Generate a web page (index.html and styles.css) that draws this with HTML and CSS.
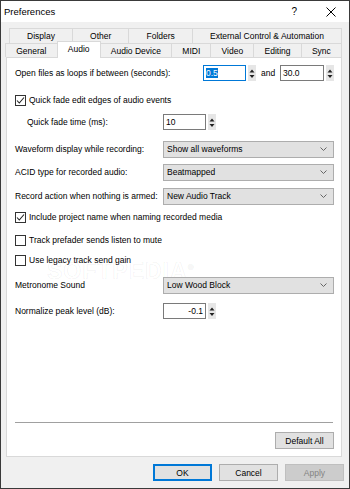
FILE: index.html
```html
<!DOCTYPE html>
<html>
<head>
<meta charset="utf-8">
<link rel="stylesheet" href="styles.css">
</head>
<body>
<div class="window">
  <div class="titlebar">
    <span class="title">Preferences</span>
    <span class="help">?</span>
    <svg class="close" width="10" height="10" viewBox="0 0 10 10"><path d="M0.5 0.5 L9.5 9.5 M9.5 0.5 L0.5 9.5" stroke="#000" stroke-width="1" fill="none"/></svg>
  </div>
  <div class="body">
    <div class="tabrow back">
      <div class="tab">Display</div>
      <div class="tab">Other</div>
      <div class="tab">Folders</div>
      <div class="tab">External Control &amp; Automation</div>
    </div>
    <div class="tabrow front">
      <div class="tab">General</div>
      <div class="tab active">Audio</div>
      <div class="tab">Audio Device</div>
      <div class="tab">MIDI</div>
      <div class="tab">Video</div>
      <div class="tab">Editing</div>
      <div class="tab">Sync</div>
    </div>
    <div class="panel">
      <div class="row r-a">
        <span class="label">Open files as loops if between (seconds):</span>
        <div class="num focus w43"><span class="sel">0.5</span></div>
        <svg class="spin" width="8" height="16" viewBox="0 0 8 16"><path d="M4 4.5 L6.5 7.5 L1.5 7.5 Z M1.5 10 L6.5 10 L4 13 Z" fill="#222"/></svg>
        <span class="and">and</span>
        <div class="num w44">30.0</div>
        <svg class="spin" width="8" height="16" viewBox="0 0 8 16"><path d="M4 4.5 L6.5 7.5 L1.5 7.5 Z M1.5 10 L6.5 10 L4 13 Z" fill="#222"/></svg>
      </div>
      <div class="row r-b">
        <span class="check"><svg width="11" height="11" viewBox="0 0 11 11"><path d="M2 5.5 L4.3 8 L9 2.5" stroke="#222" stroke-width="1.1" fill="none"/></svg></span>
        <span>Quick fade edit edges of audio events</span>
      </div>
      <div class="row r-c">
        <span class="label col indent">Quick fade time (ms):</span>
        <div class="num w43">10</div>
        <svg class="spin" width="8" height="16" viewBox="0 0 8 16"><path d="M4 4.5 L6.5 7.5 L1.5 7.5 Z M1.5 10 L6.5 10 L4 13 Z" fill="#222"/></svg>
      </div>
      <div class="row r-d">
        <span class="label col">Waveform display while recording:</span>
        <div class="select"><span>Show all waveforms</span><svg width="7" height="4" viewBox="0 0 7 4"><path d="M0.5 0.5 L3.5 3.5 L6.5 0.5" stroke="#666" fill="none"/></svg></div>
      </div>
      <div class="row r-e">
        <span class="label col">ACID type for recorded audio:</span>
        <div class="select"><span>Beatmapped</span><svg width="7" height="4" viewBox="0 0 7 4"><path d="M0.5 0.5 L3.5 3.5 L6.5 0.5" stroke="#666" fill="none"/></svg></div>
      </div>
      <div class="row r-f">
        <span class="label col">Record action when nothing is armed:</span>
        <div class="select"><span>New Audio Track</span><svg width="7" height="4" viewBox="0 0 7 4"><path d="M0.5 0.5 L3.5 3.5 L6.5 0.5" stroke="#666" fill="none"/></svg></div>
      </div>
      <div class="row r-g">
        <span class="check"><svg width="11" height="11" viewBox="0 0 11 11"><path d="M2 5.5 L4.3 8 L9 2.5" stroke="#222" stroke-width="1.1" fill="none"/></svg></span>
        <span>Include project name when naming recorded media</span>
      </div>
      <div class="row r-h">
        <span class="check"></span>
        <span>Track prefader sends listen to mute</span>
      </div>
      <div class="row r-i">
        <span class="check"></span>
        <span>Use legacy track send gain</span>
      </div>
      <div class="row r-j">
        <span class="label col">Metronome Sound</span>
        <div class="select"><span>Low Wood Block</span><svg width="7" height="4" viewBox="0 0 7 4"><path d="M0.5 0.5 L3.5 3.5 L6.5 0.5" stroke="#666" fill="none"/></svg></div>
      </div>
      <div class="row r-k">
        <span class="label col">Normalize peak level (dB):</span>
        <div class="num w43 right">-0.1</div>
        <svg class="spin" width="8" height="16" viewBox="0 0 8 16"><path d="M4 4.5 L6.5 7.5 L1.5 7.5 Z M1.5 10 L6.5 10 L4 13 Z" fill="#222"/></svg>
      </div>
      <div class="spacer"></div>
      <div class="separator"></div>
      <div class="panel-foot">
        <button class="btn">Default All</button>
      </div>
      <div class="watermark">SOFTPEDIA<sup>®</sup></div>
    </div>
    <div class="buttons">
      <button class="btn default">OK</button>
      <button class="btn">Cancel</button>
      <button class="btn disabled">Apply</button>
    </div>
  </div>
</div>
</body>
</html>
```

FILE: styles.css
```css
* { box-sizing: border-box; }
html, body { margin: 0; padding: 0; background: #fff; }
body {
  font-family: "Liberation Sans", Arial, sans-serif;
  font-size: 8.5px;
  color: #000;
}
.window {
  width: 350px;
  height: 489px;
  border: 1px solid #3a3a3a;
  display: flex;
  flex-direction: column;
  background: #f0f0f0;
}
.titlebar {
  height: 21px;
  background: #fff;
  display: flex;
  align-items: center;
  padding-left: 3px;
}
.title { font-size: 9.5px; flex: 1; }
.help { font-size: 10px; margin-right: 29px; }
.close { margin-right: 13px; }
.body {
  flex: 1;
  display: flex;
  flex-direction: column;
  padding: 6px 5px 0 4px;
}
.tabrow { display: flex; }
.tabrow.back { height: 15px; margin: 0 3px 0 4px; }
.tabrow.front { height: 14px; margin: 0 3px 0 0; position: relative; z-index: 2; }
.tab {
  flex: 1 1 auto;
  text-align: center;
  border: 1px solid #d9d9d9;
  border-bottom: none;
  margin-right: -1px;
  background: #f0f0f0;
  display: flex;
  align-items: center;
  justify-content: center;
  white-space: nowrap;
}
.tab.active {
  background: #fff;
  margin-top: -2px;
  height: 17px;
  padding-bottom: 3px;
  position: relative;
  z-index: 3;
}
.panel {
  height: 400px;
  margin: 0 2px 0 1px;
  background: #fff;
  border: 1px solid #d9d9d9;
  display: flex;
  flex-direction: column;
  padding: 6px 7px 7px 8px;
  position: relative;
}
.row { height: 18px; display: flex; align-items: center; white-space: nowrap; position: relative; z-index: 1; }
.r-b { margin-top: 9px; }
.r-c { margin-top: 4px; }
.r-d { margin-top: 9px; }
.r-e { margin-top: 5px; }
.r-f { margin-top: 6px; }
.r-g { margin-top: 3px; }
.r-h { margin-top: 5px; }
.r-i { margin-top: 2px; }
.r-j { margin-top: 7px; }
.r-k { margin-top: 8px; }
.r-a .label { flex: 1; }
.label.col { width: 148px; flex: none; }
.label.indent { padding-left: 12px; }
.num {
  height: 16px;
  border: 1px solid #7a7a7a;
  background: #fff;
  display: flex;
  align-items: center;
  padding: 0 2px;
}
.num.right { justify-content: flex-end; }
.num.focus { border-color: #0078d7; }
.w43 { width: 43px; }
.w44 { width: 44px; }
.sel { background: #0078d7; color: #fff; }
.spin { margin-left: 2px; background: #e6e6e6; }
.and { margin: 0 3px 0 5px; width: 16px; }
.check {
  width: 11px;
  height: 11px;
  border: 1px solid #333;
  background: #fff;
  margin-right: 3px;
  display: flex;
}
.check svg { margin: -1px; }
.select {
  width: 172px;
  height: 17px;
  background: #e1e1e1;
  border: 1px solid #adadad;
  display: flex;
  align-items: center;
  justify-content: space-between;
  padding: 0 6px 0 3px;
}
.spacer { flex: 1; }
.separator { height: 1px; background: #a0a0a0; margin-right: 1px; }
.panel-foot { display: flex; justify-content: flex-end; margin-top: 9px; }
.btn {
  font-family: inherit;
  font-size: 8.5px;
  height: 17px;
  width: 59px;
  background: #e1e1e1;
  border: 1px solid #adadad;
  padding: 0;
  color: #000;
}
.btn.default { border: 2px solid #0078d7; }
.btn.disabled { background: #cccccc; border-color: #bfbfbf; color: #838383; }
.buttons {
  display: flex;
  justify-content: flex-end;
  gap: 7px;
  margin-top: 7px;
}
.watermark {
  position: absolute;
  left: 40px;
  top: 200px;
  font-size: 23px;
  font-weight: bold;
  letter-spacing: 1px;
  color: transparent;
  -webkit-text-stroke: 1px rgba(0,0,0,0.05);
  pointer-events: none;
  z-index: 0;
}
.watermark sup { font-size: 8px; }
```
